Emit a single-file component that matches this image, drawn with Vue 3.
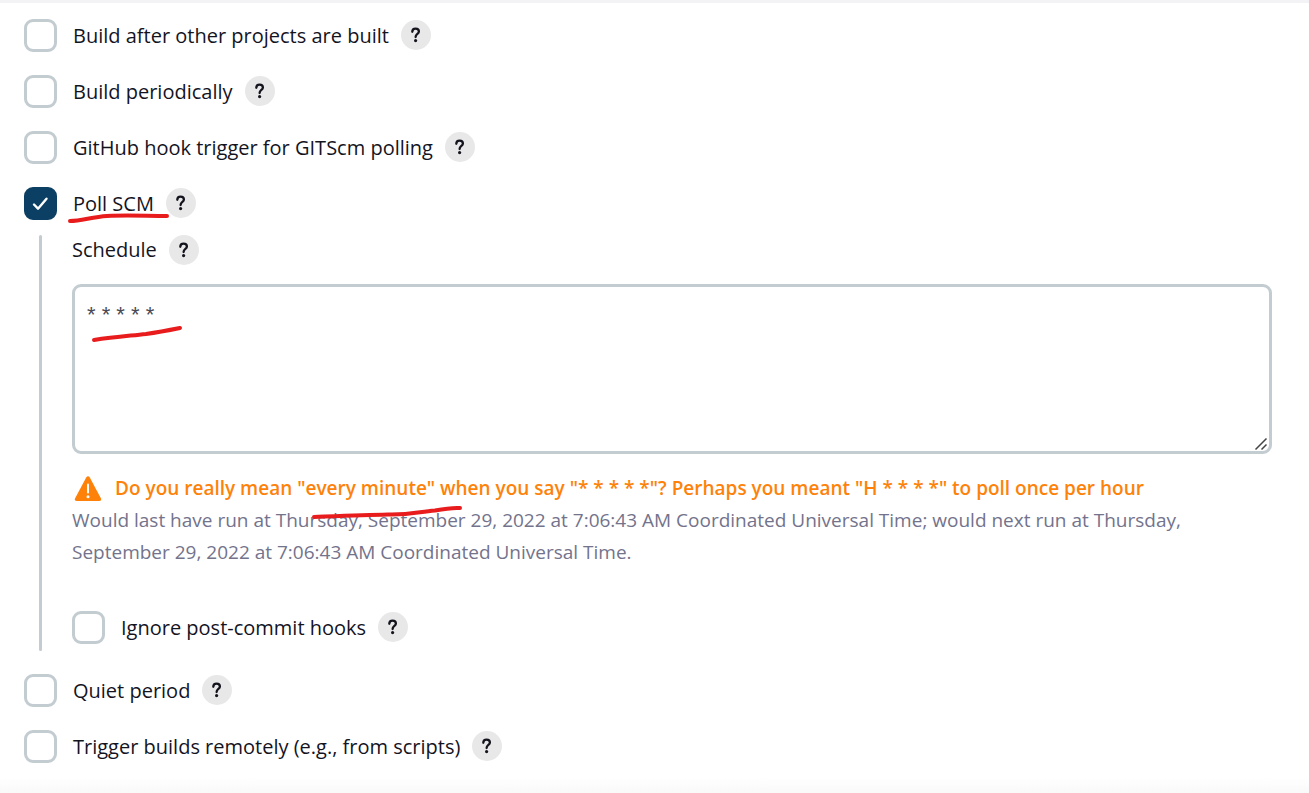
<script setup>
import { reactive, ref } from 'vue'

const before = reactive([
  { id: 'upstream', label: 'Build after other projects are built', checked: false },
  { id: 'timer', label: 'Build periodically', checked: false },
  { id: 'github', label: 'GitHub hook trigger for GITScm polling', checked: false },
])
const poll = ref(true)
const schedule = ref('* * * * *')
const ignoreHooks = ref(false)
const after = reactive([
  { id: 'quiet', label: 'Quiet period', checked: false },
  { id: 'remote', label: 'Trigger builds remotely (e.g., from scripts)', checked: false },
])
</script>

<template>
  <main class="page">
    <form class="triggers" @submit.prevent>
      <div v-for="item in before" :key="item.id" class="row">
        <input :id="item.id" v-model="item.checked" class="check" type="checkbox" />
        <label :for="item.id">{{ item.label }}</label>
        <button class="help" type="button" :aria-label="'Help for ' + item.label">
          <svg viewBox="0 0 30 30"><path d="M11.3 11.8C11.3 9.7 12.7 8.7 14.6 8.7C16.5 8.7 17.9 9.8 17.9 11.6C17.9 14 14.6 14 14.6 17" /><circle cx="14.6" cy="20.6" r="1.6" /></svg>
        </button>
      </div>

      <div class="row">
        <input id="poll" v-model="poll" class="check" type="checkbox" />
        <label for="poll" class="marked">
          Poll SCM
          <svg class="pen pen-poll" viewBox="0 0 104 12"><path d="M3 9C14 9 25 5 40 4C60 3 80 4 100 4" /></svg>
        </label>
        <button class="help" type="button" aria-label="Help for Poll SCM">
          <svg viewBox="0 0 30 30"><path d="M11.3 11.8C11.3 9.7 12.7 8.7 14.6 8.7C16.5 8.7 17.9 9.8 17.9 11.6C17.9 14 14.6 14 14.6 17" /><circle cx="14.6" cy="20.6" r="1.6" /></svg>
        </button>
      </div>

      <section class="nested">
        <div class="field-head">
          <label for="schedule">Schedule</label>
          <button class="help" type="button" aria-label="Help for Schedule">
            <svg viewBox="0 0 30 30"><path d="M11.3 11.8C11.3 9.7 12.7 8.7 14.6 8.7C16.5 8.7 17.9 9.8 17.9 11.6C17.9 14 14.6 14 14.6 17" /><circle cx="14.6" cy="20.6" r="1.6" /></svg>
          </button>
        </div>
        <div class="area">
          <textarea id="schedule" v-model="schedule" spellcheck="false"></textarea>
          <svg class="grip" viewBox="0 0 14 14"><path d="M1.500 12.500L12.500 1.500M7.500 12.500L12.500 7.500" /></svg>
          <svg class="pen pen-area" viewBox="0 0 94 20"><path d="M4 16C24 13 38 12 56 10C70 8 80 6 90 4" /></svg>
        </div>
        <div class="warning">
          <svg class="alert" viewBox="0 0 28 26"><path class="tri" d="M12.2 1.6Q14 -.9 15.8 1.6L27 22.4Q27.8 25 25 25H3Q.2 25 1 22.4Z" /><path class="bang" d="M14 8.5V16.5" /><circle cx="14" cy="20.8" r="1.5" /></svg>
          <span>Do you really mean "every minute" when you say "* * * * *"? Perhaps you meant "H * * * *" to poll once per hour</span>
        </div>
        <p class="info">
          Would last have run at Thursday, September 29, 2022 at 7:06:43 AM Coordinated Universal Time; would next run at Thursday, September 29, 2022 at 7:06:43 AM Coordinated Universal Time.
          <svg class="pen pen-info" viewBox="0 0 154 16"><path d="M4 13C30 12 54 11 78 10.500C100 11 108 8 125 6.500C138 4 142 3.500 150 4" /></svg>
        </p>
        <div class="row">
          <input id="ignore" v-model="ignoreHooks" class="check" type="checkbox" />
          <label for="ignore">Ignore post-commit hooks</label>
          <button class="help" type="button" aria-label="Help for Ignore post-commit hooks">
            <svg viewBox="0 0 30 30"><path d="M11.3 11.8C11.3 9.7 12.7 8.7 14.6 8.7C16.5 8.7 17.9 9.8 17.9 11.6C17.9 14 14.6 14 14.6 17" /><circle cx="14.6" cy="20.6" r="1.6" /></svg>
          </button>
        </div>
      </section>

      <div v-for="item in after" :key="item.id" class="row">
        <input :id="item.id" v-model="item.checked" class="check" type="checkbox" />
        <label :for="item.id">{{ item.label }}</label>
        <button class="help" type="button" :aria-label="'Help for ' + item.label">
          <svg viewBox="0 0 30 30"><path d="M11.3 11.8C11.3 9.7 12.7 8.7 14.6 8.7C16.5 8.7 17.9 9.8 17.9 11.6C17.9 14 14.6 14 14.6 17" /><circle cx="14.6" cy="20.6" r="1.6" /></svg>
        </button>
      </div>
    </form>
    <div class="fade"></div>
  </main>
</template>

<style>
body {
  margin: 0;
  background: #fff;
}
</style>

<style scoped>
.page {
  box-sizing: border-box;
  min-height: 100vh;
  display: flex;
  flex-direction: column;
  justify-content: space-between;
  border-top: 3px solid #f3f3f6;
  color: #14141f;
  font-family: "Open Sans", "Noto Sans", sans-serif;
  font-size: 19px;
  font-weight: 400;
  line-height: 32px;
}
.triggers {
  display: flex;
  flex-direction: column;
  gap: 23px;
  padding: 16px 37px 0 24px;
}
.row,
.field-head {
  display: flex;
  align-items: center;
  font-size: 20px;
}
.row {
  height: 33px;
}
.check {
  appearance: none;
  box-sizing: border-box;
  flex: none;
  width: 33px;
  height: 33px;
  margin: 0 16px 0 0;
  border: 3px solid #c3ccd1;
  border-radius: 9px;
  background: #fff;
}
.check:checked {
  border-color: #0b3f63;
  background: #0b3f63 url("data:image/svg+xml,%3Csvg xmlns='http://www.w3.org/2000/svg' viewBox='0 0 27 27'%3E%3Cpath d='M7 14.500L11 18.700L19.500 8.700' fill='none' stroke='white' stroke-width='2.400' stroke-linecap='round' stroke-linejoin='round'/%3E%3C/svg%3E") center / 27px 27px no-repeat;
}
.help {
  flex: none;
  width: 30px;
  height: 30px;
  margin: 0 0 0 12px;
  padding: 0;
  border: 0;
  border-radius: 50%;
  background: #e8e8e8;
}
.row .help {
  margin-bottom: 2px;
}
.help svg {
  display: block;
  width: 30px;
  height: 30px;
  fill: #14141f;
}
.help path {
  fill: none;
  stroke: #14141f;
  stroke-width: 2.3;
  stroke-linecap: round;
}
.nested {
  position: relative;
  margin-top: -8px;
  padding: 0 0 7px 48px;
}
.nested::before {
  content: "";
  position: absolute;
  top: 0;
  bottom: 0;
  left: 15px;
  width: 3px;
  border-radius: 2px;
  background: #c3ccd1;
}
.field-head {
  height: 30px;
}
.area {
  position: relative;
  margin-top: 19px;
}
textarea {
  display: block;
  box-sizing: border-box;
  width: 100%;
  height: 170px;
  padding: 12px;
  border: 3px solid #c3ccd1;
  border-radius: 9px;
  outline: 0;
  resize: vertical;
  background: #fff;
  color: #4a4a55;
  font-family: "Liberation Sans", sans-serif;
  font-size: 22px;
  font-weight: 400;
  line-height: 32px;
}
textarea::-webkit-resizer {
  background: transparent;
}
.grip {
  position: absolute;
  right: 4px;
  bottom: 3px;
  width: 14px;
  height: 14px;
  pointer-events: none;
  fill: none;
  stroke: #444;
  stroke-width: 1.5;
}
.warning {
  display: flex;
  align-items: center;
  gap: 13px;
  margin-top: 19px;
  padding-left: 2px;
  color: #fe820a;
  font-weight: 600;
  line-height: 31px;
}
.alert {
  flex: none;
  width: 28px;
  height: 26px;
  fill: #fff;
}
.tri {
  fill: #fe820a;
}
.bang {
  stroke: #fff;
  stroke-width: 2;
  stroke-linecap: round;
}
.info {
  position: relative;
  margin: 0 0 43px;
  color: #73738c;
}
.marked {
  position: relative;
}
.pen {
  position: absolute;
  pointer-events: none;
  fill: none;
  stroke: #e81c1c;
  stroke-width: 4;
  stroke-linecap: round;
}
.pen-poll {
  top: 24px;
  left: -6px;
  width: 104px;
  height: 12px;
}
.pen-area {
  top: 40px;
  left: 18px;
  width: 94px;
  height: 20px;
}
.pen-info {
  top: 0;
  left: 238px;
  width: 154px;
  height: 16px;
}
.fade {
  height: 16px;
  background: linear-gradient(#fff, #f9f9f9);
}
</style>
